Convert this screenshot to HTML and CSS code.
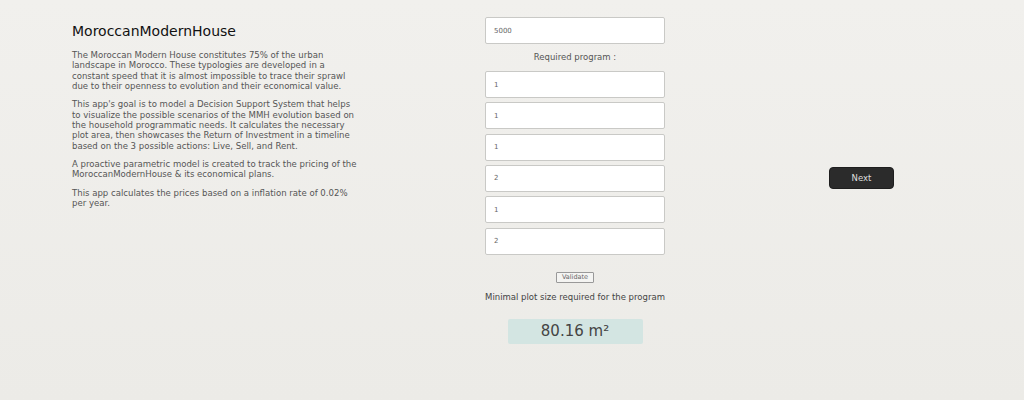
FILE: index.html
```html
<!DOCTYPE html>
<html>
<head>
<meta charset="utf-8">
<link rel="stylesheet" href="styles.css">
</head>
<body>
<div class="page">
  <section class="intro">
    <h1 class="title">MoroccanModernHouse</h1>
    <p>The Moroccan Modern House constitutes 75% of the urban landscape in Morocco. These typologies are developed in a constant speed that it is almost impossible to trace their sprawl due to their openness to evolution and their economical value.</p>
    <p>This app's goal is to model a Decision Support System that helps to visualize the possible scenarios of the MMH evolution based on the household programmatic needs. It calculates the necessary plot area, then showcases the Return of Investment in a timeline based on the 3 possible actions: Live, Sell, and Rent.</p>
    <p>A proactive parametric model is created to track the pricing of the MoroccanModernHouse &amp; its economical plans.</p>
    <p>This app calculates the prices based on a inflation rate of 0.02% per year.</p>
  </section>
  <section class="form">
    <input class="field" type="text" value="5000">
    <div class="label">Required program :</div>
    <div class="fields">
      <input class="field" type="text" value="1">
      <input class="field" type="text" value="1">
      <input class="field" type="text" value="1">
      <input class="field" type="text" value="2">
      <input class="field" type="text" value="1">
      <input class="field" type="text" value="2">
    </div>
    <button class="validate">Validate</button>
    <div class="caption">Minimal plot size required for the program</div>
    <div class="result">80.16 m²</div>
  </section>
  <section class="side">
    <button class="next">Next</button>
  </section>
</div>
</body>
</html>
```

FILE: styles.css
```css
html, body {
  margin: 0;
  padding: 0;
}
body {
  width: 1024px;
  height: 400px;
  background: linear-gradient(#f1f0ed, #ecebe7);
  font-family: "DejaVu Sans", "Open Sans", sans-serif;
  color: #444;
  overflow: hidden;
}
.page {
  display: grid;
  grid-template-columns: 287px 180px 65px;
  column-gap: 126px;
  padding-left: 72px;
  align-items: start;
}
.page > .side {
  margin-left: 38px;
}
.intro {
  padding-top: 23px;
}
.title {
  margin: 0 0 10px 0;
  font-size: 14px;
  font-weight: 500;
  color: #111;
  line-height: 17px;
}
.intro p {
  margin: 0 0 8px 0;
  font-size: 8.55px;
  line-height: 10.35px;
  color: #555;
}
.form {
  padding-top: 17px;
  display: flex;
  flex-direction: column;
  align-items: center;
}
.field {
  box-sizing: border-box;
  width: 180px;
  height: 27px;
  border: 1px solid #c9c9c6;
  border-radius: 2px;
  background: #fff;
  padding: 0 8px;
  font-family: inherit;
  font-size: 7px;
  color: #666;
  outline: none;
  display: block;
}
.label {
  font-size: 8.5px;
  color: #555;
  height: 27px;
  line-height: 27px;
}
.fields {
  display: flex;
  flex-direction: column;
  gap: 4.33px;
}
.validate {
  margin-top: 17px;
  box-sizing: border-box;
  width: 38px;
  height: 11px;
  padding: 0;
  border: 1px solid #999;
  border-radius: 1px;
  background: #f4f4f2;
  font-family: inherit;
  font-size: 6.5px;
  color: #666;
  line-height: 9px;
}
.caption {
  margin-top: 9px;
  font-size: 8.5px;
  color: #444;
  line-height: 11px;
}
.result {
  margin-top: 16px;
  box-sizing: border-box;
  width: 135px;
  height: 25px;
  background: #d3e5e2;
  border-radius: 2px;
  text-align: center;
  font-size: 15px;
  line-height: 25px;
  color: #444;
}
.side {
  padding-top: 166px;
}
.next {
  box-sizing: border-box;
  width: 65px;
  height: 22px;
  background: #2b2b2b;
  border: 1px solid #1e1e1e;
  border-radius: 4px;
  color: #ddd;
  font-family: inherit;
  font-size: 8.5px;
  padding: 0;
}
```
